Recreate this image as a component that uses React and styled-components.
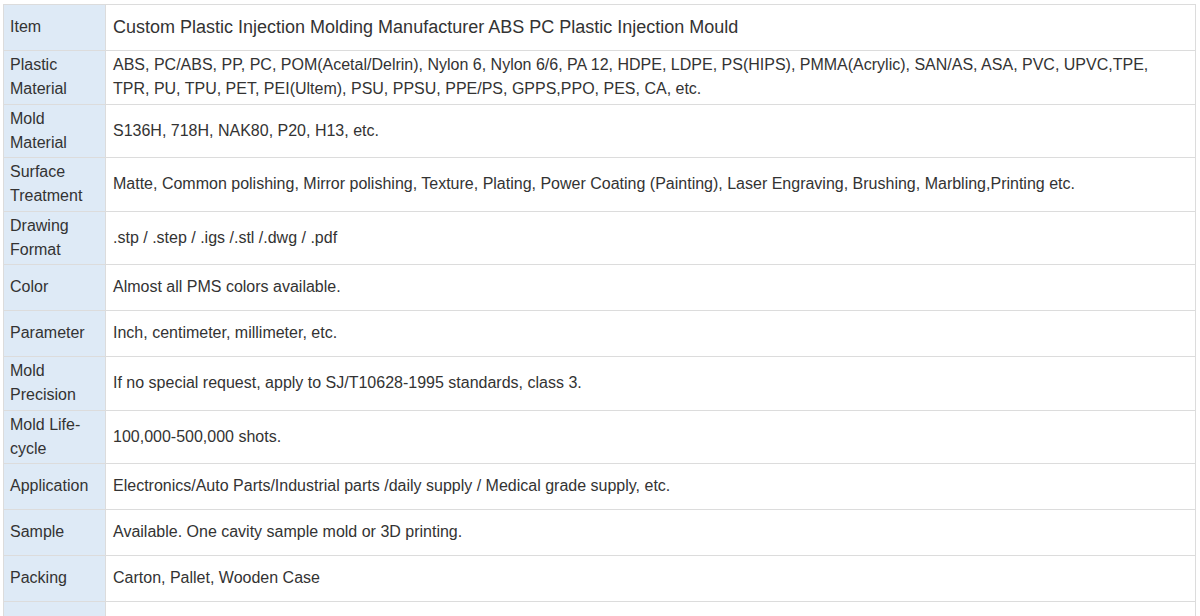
import { createGlobalStyle, styled } from "styled-components";

const GlobalStyle = createGlobalStyle`
	html, body {
		margin: 0;
		padding: 0;
		background: #ffffff;
	}
	body {
		font-family: "Liberation Sans", Arial, sans-serif;
		color: #333333;
	}
`;

const rows = [
	{ label: "Item", value: "Custom Plastic Injection Molding Manufacturer ABS PC Plastic Injection Mould", big: true },
	{
		label: "Plastic Material",
		value:
			"ABS, PC/ABS, PP, PC, POM(Acetal/Delrin), Nylon 6, Nylon 6/6, PA 12, HDPE, LDPE, PS(HIPS), PMMA(Acrylic), SAN/AS, ASA, PVC, UPVC,TPE, TPR, PU, TPU, PET, PEI(Ultem), PSU, PPSU, PPE/PS, GPPS,PPO, PES, CA, etc.",
	},
	{ label: "Mold Material", value: "S136H, 718H, NAK80, P20, H13, etc." },
	{
		label: "Surface Treatment",
		value:
			"Matte, Common polishing, Mirror polishing, Texture, Plating, Power Coating (Painting), Laser Engraving, Brushing, Marbling,Printing etc.",
	},
	{ label: "Drawing Format", value: ".stp / .step / .igs /.stl /.dwg / .pdf" },
	{ label: "Color", value: "Almost all PMS colors available." },
	{ label: "Parameter", value: "Inch, centimeter, millimeter, etc." },
	{ label: "Mold Precision", value: "If no special request, apply to SJ/T10628-1995 standards, class 3." },
	{ label: "Mold Life-cycle", value: "100,000-500,000 shots." },
	{ label: "Application", value: "Electronics/Auto Parts/Industrial parts /daily supply / Medical grade supply, etc." },
	{ label: "Sample", value: "Available. One cavity sample mold or 3D printing." },
	{ label: "Packing", value: "Carton, Pallet, Wooden Case" },
	{ label: "MOQ", value: "1 set" },
];

const SpecTable = () => {
	return (
		<Wrap>
			<Table>
				<tbody>
					{rows.map((row, i) => (
						<Row key={i}>
							<Label>{row.label}</Label>
							<Value $big={row.big}>{row.value}</Value>
						</Row>
					))}
				</tbody>
			</Table>
		</Wrap>
	);
};

export default function App() {
	return (
		<>
			<GlobalStyle />
			<SpecTable />
		</>
	);
}

const Wrap = styled.div`
	padding: 4px 4px 0 3px;
	height: 612px;
	overflow: hidden;
`;

const Table = styled.table`
	width: 1193px;
	border-collapse: collapse;
	border: 1px solid #dcdcdc;
	font-size: 16px;
	line-height: 24px;
`;

const Row = styled.tr`
	height: 46px;
`;

const Label = styled.td`
	width: 89px;
	padding: 2px 6px 2.5px 6px;
	background: #deeaf6;
	border: 1px solid #dcdcdc;
	vertical-align: middle;
	color: #333333;
`;

const Value = styled.td`
	padding: 2px 7px 2.5px 7px;
	border: 1px solid #dcdcdc;
	vertical-align: middle;
	font-size: ${p => (p.$big ? "18px" : "16px")};
	color: #333333;
`;
